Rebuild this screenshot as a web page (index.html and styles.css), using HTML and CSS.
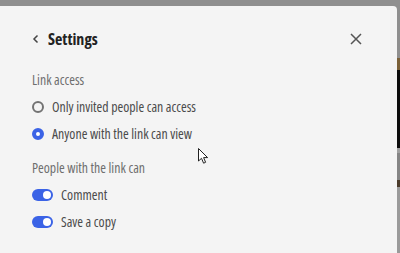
FILE: index.html
```html
<!DOCTYPE html>
<html lang="en">

<head>
    <meta charset="UTF-8">
    <title>Settings</title>
    <link rel="stylesheet" href="styles.css">
</head>

<body>
    <div class="screen">
        <div class="panel">
            <div class="header">
                <button class="back" aria-label="Back">
                    <svg width="8" height="10" viewBox="0 0 8 10"><path d="M5.5 1.5 L2 5 L5.5 8.5" fill="none" stroke="#444" stroke-width="1.5"/></svg>
                </button>
                <h3>Settings</h3>
                <button class="close" aria-label="Close">
                    <svg width="12" height="12" viewBox="0 0 12 12"><path d="M1 1 L11 11 M11 1 L1 11" fill="none" stroke="#555" stroke-width="1.5"/></svg>
                </button>
            </div>

            <div class="section-label">Link access</div>
            <div class="options">
                <label class="option">
                    <span class="radio"></span>
                    <span>Only invited people can access</span>
                </label>
                <label class="option">
                    <span class="radio checked"></span>
                    <span>Anyone with the link can view</span>
                </label>
            </div>

            <div class="section-label">People with the link can</div>
            <div class="options">
                <label class="option">
                    <span class="toggle"></span>
                    <span>Comment</span>
                </label>
                <label class="option">
                    <span class="toggle"></span>
                    <span>Save a copy</span>
                </label>
            </div>

            <!-- mouse pointer -->
            <svg class="pointer" width="12" height="17" viewBox="0 0 12 17"><path d="M0.5 0.5 L0.5 13 L3.5 10.3 L5.6 15.2 L7.6 14.3 L5.6 9.6 L9.6 9.6 Z" fill="#fff" stroke="#222" stroke-width="1"/></svg>
        </div>
        <div class="edge"></div>
    </div>
</body>

</html>
```

FILE: styles.css
```css
body {
    margin: 0;
    padding: 0;
    font-family: "Open Sans", Lato, Arial, sans-serif;
    font-stretch: 80%;
    background-color: #8f8f8f;
}

.screen {
    display: flex;
    height: 253px;
    padding-top: 6px;
    box-sizing: border-box;
    overflow: hidden;
}

.panel {
    position: relative;
    width: 397px;
    background-color: #f4f4f4;
    border-top-right-radius: 4px;
    padding: 0 32px;
    box-sizing: border-box;
}

.edge {
    flex: 1;
    margin-top: -6px;
    background: linear-gradient(#8f8f8f 0 58px, #7a6038 58px 70px, #0c0c0c 70px 148px, #a0a0a0 148px 153px, #858585 153px 180px, #4a3a2a 180px 187px, #9a9a9a 187px);
}

.header {
    display: flex;
    align-items: center;
    height: 24px;
    margin-top: 21px;
}

.back,
.close {
    background: none;
    border: none;
    padding: 0;
    display: flex;
    cursor: pointer;
}

.back {
    margin-right: 8px;
}

.close {
    margin-left: auto;
    margin-right: 3px;
}

h3 {
    margin: 0;
    font-size: 16px;
    font-weight: 700;
    color: #222;
}

.section-label {
    margin-top: 20px;
    font-size: 13.8px;
    line-height: 18px;
    color: #6e6e6e;
}

.options + .section-label {
    margin-top: 12px;
}

.options {
    display: flex;
    flex-direction: column;
    padding-top: 4px;
}

.option {
    display: flex;
    align-items: center;
    height: 27px;
    font-size: 13.8px;
    color: #4b4b4b;
}

.radio {
    width: 12px;
    height: 12px;
    border: 2px solid #737373;
    border-radius: 50%;
    box-sizing: border-box;
    margin-right: 8px;
}

.radio.checked {
    border: 4px solid #3b63e6;
    background-color: #fff;
}

.toggle {
    position: relative;
    width: 21px;
    height: 12px;
    border-radius: 6px;
    background-color: #3b63e6;
    margin-right: 8px;
}

.toggle::after {
    content: "";
    position: absolute;
    right: 2px;
    top: 2px;
    width: 8px;
    height: 8px;
    border-radius: 50%;
    background-color: #fff;
}

.pointer {
    position: absolute;
    left: 198px;
    top: 142px;
}
```
